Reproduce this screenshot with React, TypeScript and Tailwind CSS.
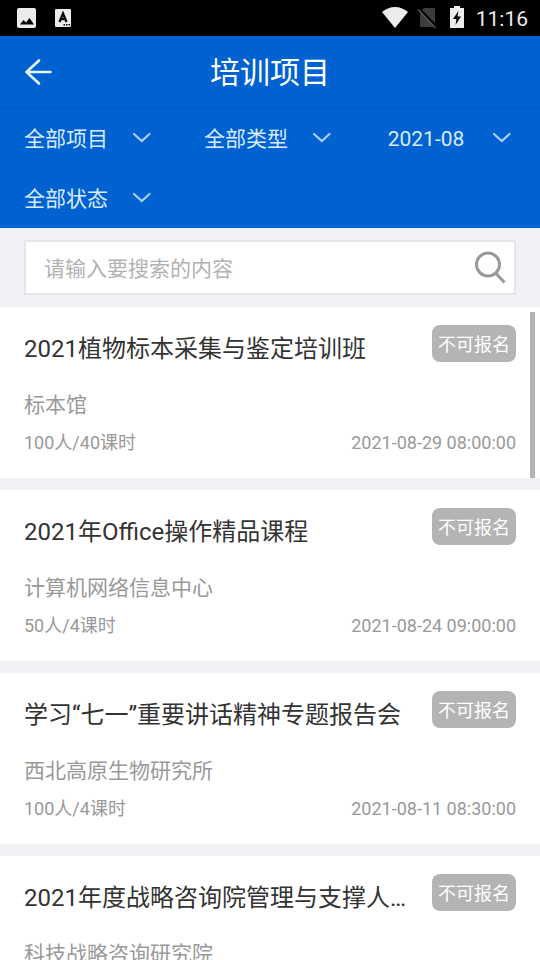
import { useState } from 'react';

interface Training {
  id: number;
  title: string;
  org: string;
  quota: string;
  startTime: string;
}

const filters = [
  { name: '项目', options: ['全部项目'] },
  { name: '类型', options: ['全部类型'] },
  { name: '月份', options: ['2021-08'] },
  { name: '状态', options: ['全部状态'] },
];

const trainings: Training[] = [
  { id: 1, title: '2021植物标本采集与鉴定培训班', org: '标本馆', quota: '100人/40课时', startTime: '2021-08-29 08:00:00' },
  { id: 2, title: '2021年Office操作精品课程', org: '计算机网络信息中心', quota: '50人/4课时', startTime: '2021-08-24 09:00:00' },
  { id: 3, title: '学习“七一”重要讲话精神专题报告会', org: '西北高原生物研究所', quota: '100人/4课时', startTime: '2021-08-11 08:30:00' },
  { id: 4, title: '2021年度战略咨询院管理与支撑人员培训', org: '科技战略咨询研究院', quota: '60人/8课时', startTime: '2021-08-05 09:00:00' },
];

function StatusBar() {
  return (
    <div className="flex h-9 shrink-0 items-center justify-between bg-black pl-4 pr-3 text-[#ececec]">
      <div className="flex items-center gap-4">
        <svg className="h-5 w-5" viewBox="0 0 20 20" fill="currentColor">
          <rect x="1" y="0" width="19" height="20" rx="2" />
          <path d="M4 16.5 7.5 12 10 14.5 13.5 10 18 16.5Z" fill="#000" />
        </svg>
        <svg className="h-5 w-5" viewBox="0 0 20 20" fill="currentColor">
          <rect x="3" y="1" width="16" height="18" rx="1" />
          <path d="M7.5 14 11 5.5 14.5 14M8.7 11.2H13.3" fill="none" stroke="#000" strokeWidth="2.2" />
          <path d="M11.5 16H13v1.5h-1.5zM14 16h1.5v1.5H14zM16.5 16H18v1.5h-1.5z" fill="#000" />
        </svg>
      </div>
      <div className="flex items-center">
        <svg className="h-6 w-7" viewBox="0 0 28 24" fill="currentColor">
          <path d="M14 22 1 6C4.5 3 9 1 14 1S23.500 3 27 6Z" />
        </svg>
        <svg className="ml-2 h-6 w-5" viewBox="0 0 20 24">
          <path d="M7 2H17a1 1 0 0 1 1 1V21H4a1 1 0 0 1-1-1V6Z" fill="#3d3d3d" />
          <path d="M2 3 19.5 21" stroke="#000" strokeWidth="3" />
          <path d="M1 3.5 18.5 22" stroke="#555" strokeWidth="1.5" />
        </svg>
        <svg className="ml-3 h-6 w-4" viewBox="0 0 16 24" fill="currentColor">
          <path d="M5 0h6v2h4v20H1V2h4Z" />
          <path d="M9.5 5 4 13h3.5L6.5 19 12 10.5H8.5Z" fill="#000" />
        </svg>
        <span className="ml-[11px] pt-0.5 text-[21px] leading-8">11:16</span>
      </div>
    </div>
  );
}

function FilterSelect({ name, options }: { name: string; options: string[] }) {
  return (
    <div className="relative">
      <select
        aria-label={name}
        className="block h-15 w-full appearance-none bg-transparent pl-6 pr-18 pt-1 text-center text-[21px] text-[#d9ecff] outline-none"
      >
        {options.map((option) => (
          <option key={option}>{option}</option>
        ))}
      </select>
      <svg
        className="pointer-events-none absolute right-7 top-6 h-3 w-5"
        viewBox="0 0 20 12"
        fill="none"
        stroke="#a9d0fb"
        strokeWidth="2.2"
        strokeLinecap="round"
      >
        <path d="M2 2 9.800 9 17.500 2" />
      </svg>
    </div>
  );
}

function TrainingCard({ training }: { training: Training }) {
  return (
    <li className="bg-white px-6 pb-[23px] pt-[18px]">
      <div className="flex h-12 items-start justify-between gap-6">
        <h2 className="truncate text-2xl leading-12 text-[#333333]">{training.title}</h2>
        <button
          type="button"
          disabled
          className="h-[37px] w-21 shrink-0 rounded-lg bg-[#b4b4b4] pt-0.5 text-lg text-white"
        >
          不可报名
        </button>
      </div>
      <p className="mt-4 text-[21px] leading-8 text-[#999999]">{training.org}</p>
      <div className="mt-2.5 flex justify-between text-lg leading-6 text-[#999999]">
        <span>{training.quota}</span>
        <time>{training.startTime}</time>
      </div>
    </li>
  );
}

export default function App() {
  const [keyword, setKeyword] = useState('');

  return (
    <div
      lang="zh-CN"
      className="flex h-screen flex-col overflow-hidden bg-[#eff1f4] font-['Roboto','Noto_Sans_CJK_SC',sans-serif]"
    >
      <StatusBar />

      <header className="relative flex h-18 shrink-0 items-center justify-center bg-[#0061d0]">
        <button type="button" aria-label="返回" className="absolute left-6 top-5">
          <svg
            className="h-8 w-7"
            viewBox="0 0 28 32"
            fill="none"
            stroke="#e6f8ff"
            strokeWidth="2.6"
            strokeLinecap="round"
            strokeLinejoin="round"
          >
            <path d="M15 4.5 2.5 16 15 27.5M2.5 16H26.5" />
          </svg>
        </button>
        <h1 className="pt-0.5 text-3xl text-white">培训项目</h1>
      </header>

      <div className="grid shrink-0 grid-cols-3 bg-[#0061d0] shadow-[inset_0_1px_0_#0057bd]">
        {filters.map((filter) => (
          <FilterSelect key={filter.name} name={filter.name} options={filter.options} />
        ))}
      </div>

      <div className="shrink-0 px-6 py-3">
        <label className="flex h-[55px] items-center border-2 border-[#e4e6e8] bg-white pl-[18px] pr-2">
          <input
            type="text"
            aria-label="搜索"
            value={keyword}
            onChange={(e) => setKeyword(e.target.value)}
            placeholder="请输入要搜索的内容"
            className="min-w-0 flex-1 pt-1 text-[21px] text-[#333333] outline-none placeholder:text-[#b2b2b2]"
          />
          <svg className="h-9 w-8" viewBox="0 0 32 36" fill="none" stroke="#999999" strokeWidth="3">
            <circle cx="14" cy="14.5" r="11.5" />
            <path d="M22 23.5 30.5 32.5" />
          </svg>
        </label>
      </div>

      <div className="relative min-h-0 flex-1 overflow-hidden">
        <ul className="flex flex-col gap-3">
          {trainings.map((training) => (
            <TrainingCard key={training.id} training={training} />
          ))}
        </ul>
        <div className="absolute right-[5px] top-[5px] h-[166px] w-[5px] bg-[#b3b3b3]" />
      </div>
    </div>
  );
}
